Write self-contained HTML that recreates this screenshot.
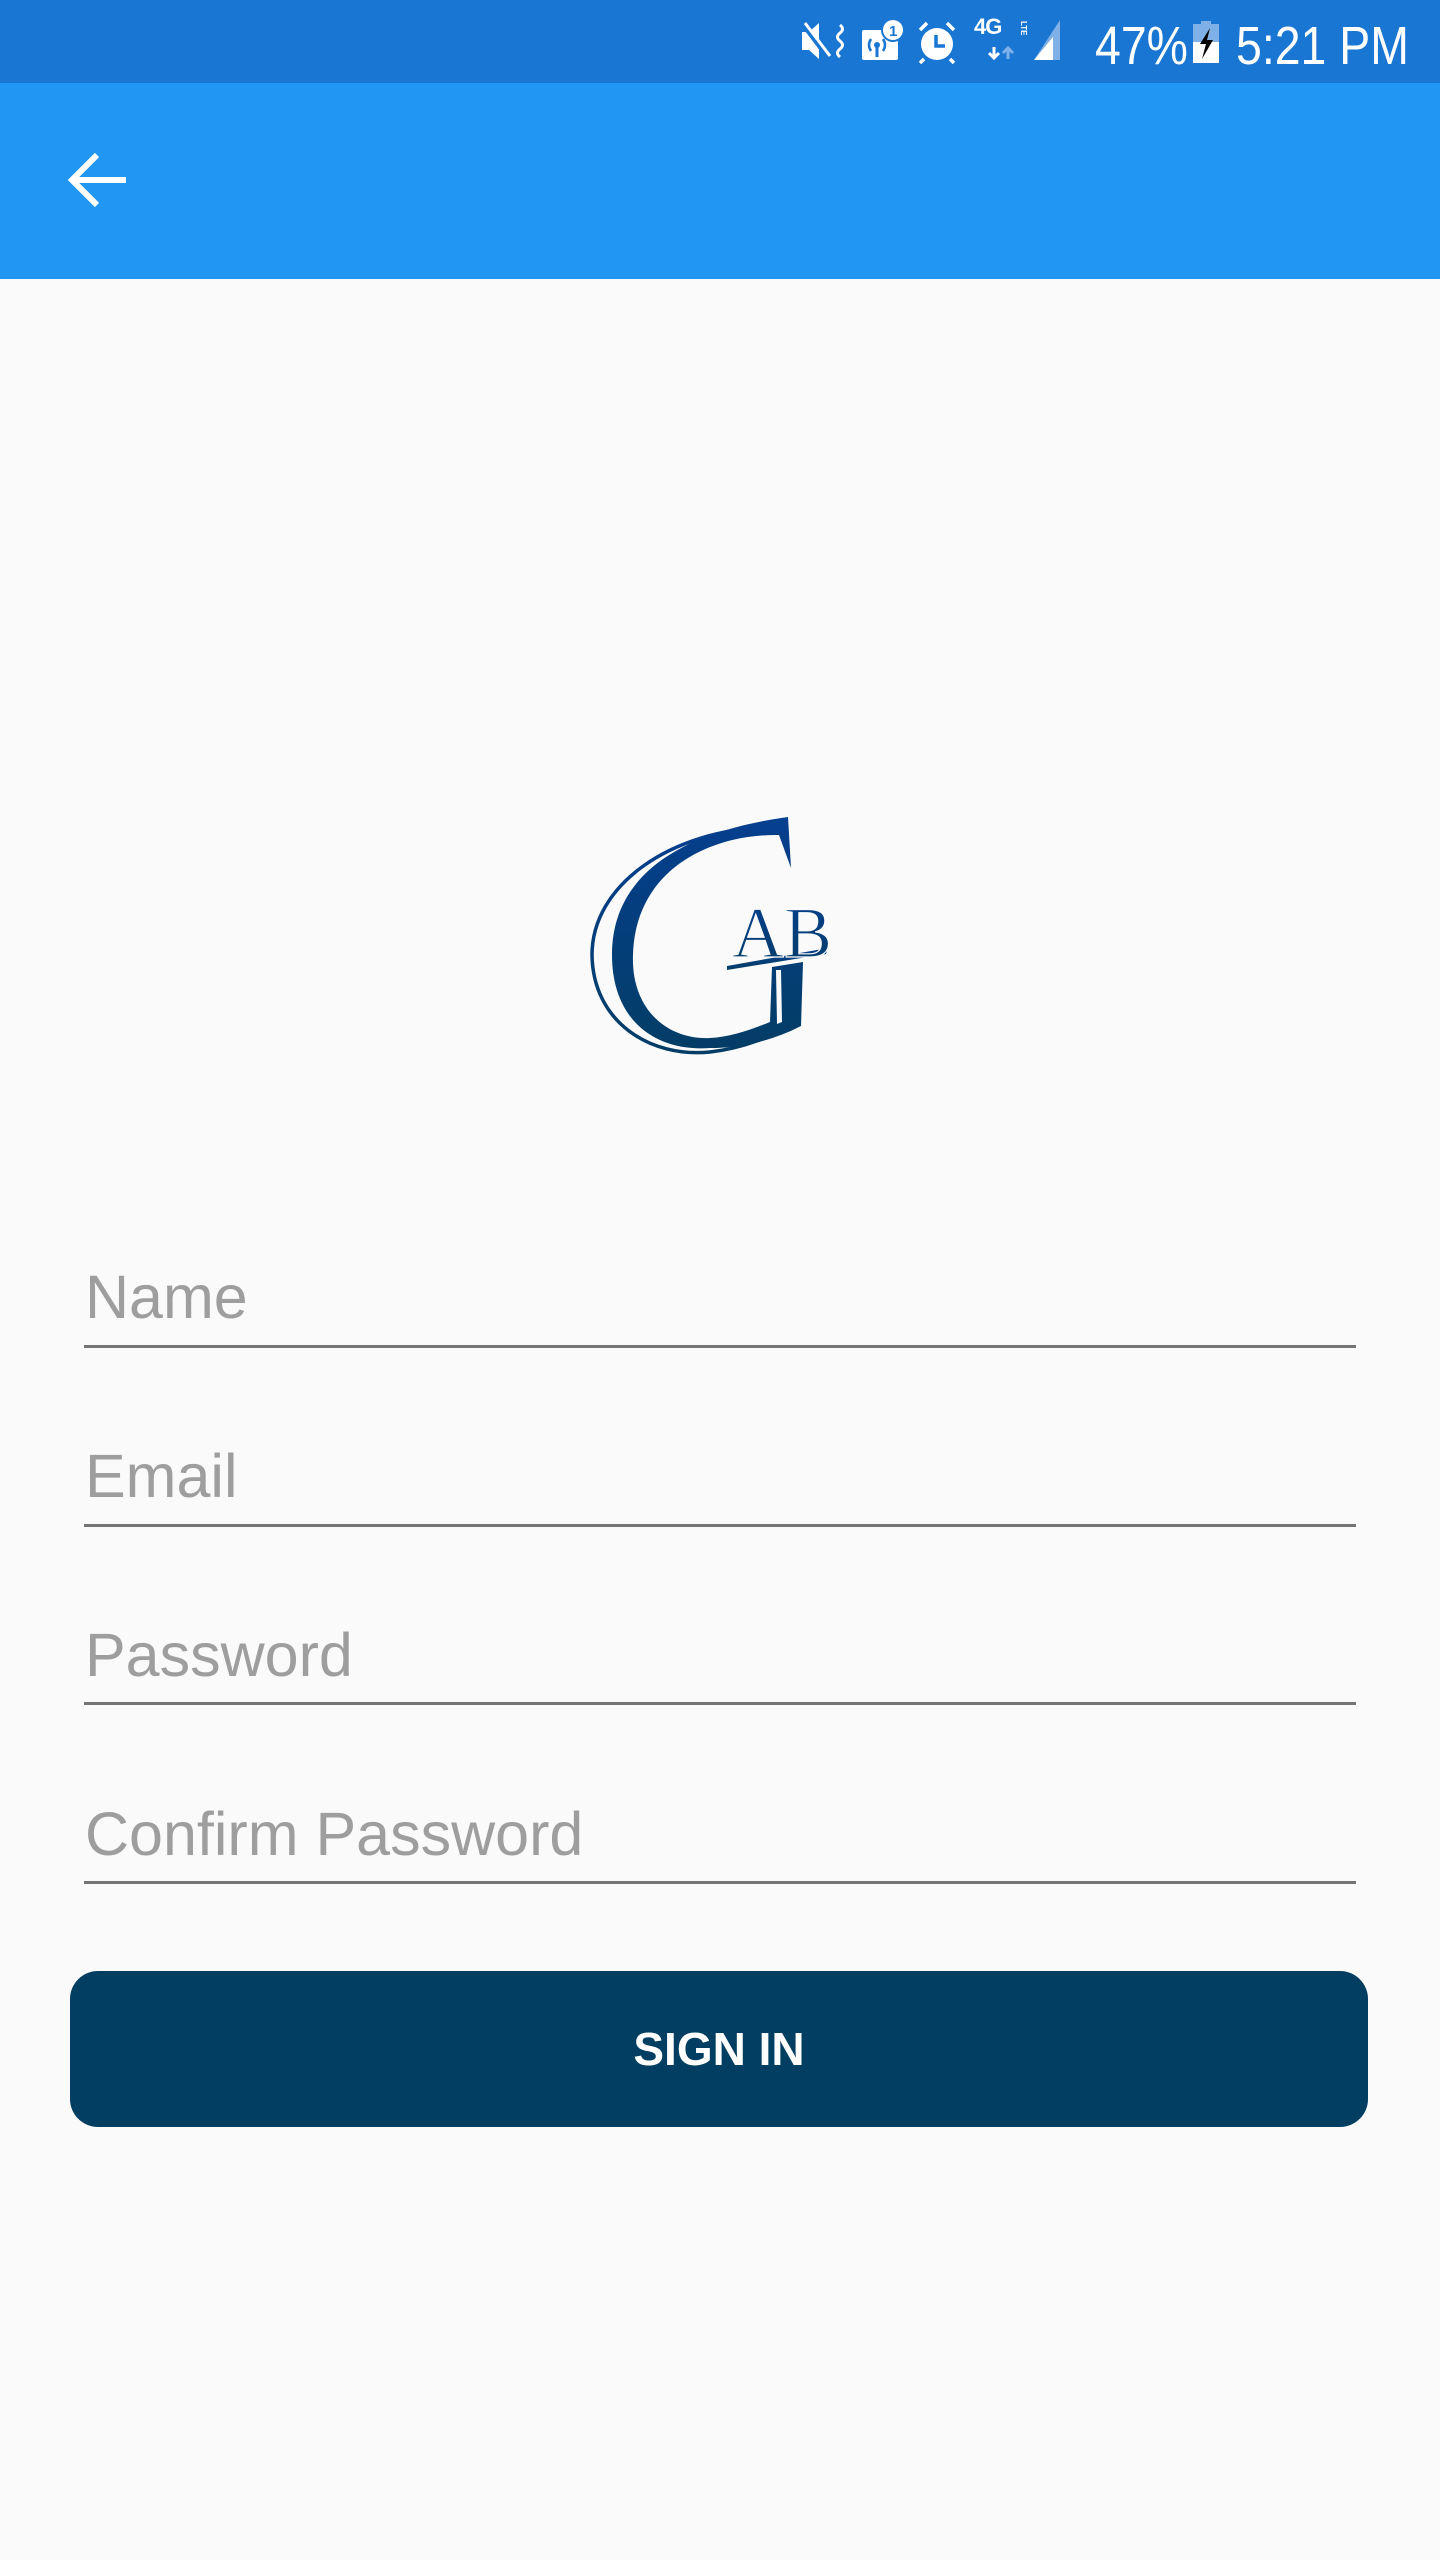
<!DOCTYPE html>
<html><head><meta charset="utf-8"><style>
html,body{margin:0;padding:0}
body{width:1440px;height:2560px;background:#fafafa;position:relative;overflow:hidden;font-family:"Liberation Sans",Roboto,sans-serif}
.sb{position:absolute;left:0;top:0;width:1440px;height:83px;background:#1976d2;color:#fff}
.ab{position:absolute;left:0;top:83px;width:1440px;height:196px;background:#2196f3}
.lbl{position:absolute;left:85px;font-size:61px;color:#9e9e9e;line-height:1}
.ln{position:absolute;left:84px;width:1272px;height:3px;background:#757575}
.btn{position:absolute;left:70px;top:1971px;width:1298px;height:156px;background:#023e62;border-radius:28px;color:#fff;font-weight:bold;font-size:46px;text-align:center;line-height:156px}
.st{position:absolute;top:14px;font-size:54px;line-height:64px;transform-origin:0 0;transform:scaleX(0.86);white-space:nowrap}
</style></head><body>
<div class="sb">
<svg style="position:absolute;left:780px;top:15px" width="300" height="70" viewBox="0 0 300 70" fill="#fff">
<path d="M22 17 h7 l10 -9 v36 l-10 -9 h-7z"/>
<path d="M23 10 L48 43" stroke="#1976d2" stroke-width="4"/>
<path d="M23 10 L48 43" stroke="#fff" stroke-width="3" transform="translate(2,-2)"/>
<path d="M60 10q5 4 0 8q-5 4 0 8q5 4 0 8q-5 4 0 8" stroke="#fff" stroke-width="3" fill="none"/>
<rect x="82" y="15" width="36" height="30" rx="2"/>
<circle cx="113" cy="15" r="12" fill="#1976d2"/><circle cx="113" cy="15" r="10"/>
<text x="109" y="21" font-size="15" fill="#1976d2" font-weight="bold">1</text>
<path d="M97 42 V32" stroke="#1976d2" stroke-width="3"/><circle cx="97" cy="30" r="3" fill="#1976d2"/>
<path d="M91 24 q-4 6 0 12 M103 24 q4 6 0 12" stroke="#1976d2" stroke-width="2.5" fill="none"/>
<circle cx="157" cy="29" r="16"/>
<path d="M156 20 V31 H165" stroke="#1976d2" stroke-width="3.5" fill="none"/>
<path d="M140 15 l7 -7 M174 15 l-7 -7 M144 44 l-4 4 M170 44 l4 4" stroke="#fff" stroke-width="3.5"/>
<text x="194" y="19" font-size="22" font-weight="bold" fill="#fff" style="letter-spacing:-1px">4G</text>
<text x="0" y="0" font-size="8" font-weight="bold" fill="#fff" transform="translate(241,6) rotate(90)">LTE</text>
<path d="M214 32v11M209 38l5 5 5-5" stroke="#fff" stroke-width="3" fill="none"/>
<path d="M228 44v-11M223 38l5-5 5 5" stroke="#7fb1e8" stroke-width="3" fill="none"/>
<path d="M280 5 V45 H254 Z" fill="#7fb1e8"/>
<path d="M254 45 L273 22 V45 Z"/>
</svg>
<div class="st" style="left:1095px">47%</div>
<svg style="position:absolute;left:1193px;top:21px" width="26" height="42" viewBox="0 0 26 42"><rect x="8" y="0" width="10" height="3" fill="#7fb1e8"/><rect x="0" y="3" width="26" height="39" fill="#7fb1e8"/><rect x="0" y="21" width="26" height="21" fill="#fff"/><path d="M17 7 L7 23 H13 L9 38 L20 19 H14 Z" fill="#000"/></svg>
<div class="st" style="left:1236px">5:21 PM</div>
</div>
<div class="ab">
<svg style="position:absolute;left:64px;top:66px" width="64" height="64" viewBox="0 0 64 64"><path d="M62 31H10M33 6L8 31l25 25" stroke="#fff" stroke-width="6" fill="none"/></svg>
</div>
<svg style="position:absolute;left:560px;top:790px" width="300" height="290" viewBox="0 0 300 290">
<defs><linearGradient id="g" x1="0" y1="0" x2="0" y2="1"><stop offset="0" stop-color="#053f8f"/><stop offset="1" stop-color="#033d66"/></linearGradient></defs>
<path d="M210 37 C110 40 32 95 32 165 C33 232 90 268 150 262 C185 258 212 246 238 232" stroke="url(#g)" stroke-width="3.5" fill="none"/>
<path d="M228 27 L231 78 L219 45 C150 44 75 80 73 165 C71 222 110 250 150 248 C170 247 190 240 210 232 L212 177 L243 172 L241 236 C210 252 178 258 150 258 C95 262 52 230 52 165 C52 85 120 42 228 27Z" fill="url(#g)"/>
<path d="M167 176 L268 158 L266 164 L167 180Z" fill="url(#g)"/>
<path d="M216 180 L221 180 L222 232 L217 234Z" fill="#fafafa"/>
<text x="172" y="167" font-family="Liberation Serif,serif" font-size="72" fill="url(#g)" stroke="#fafafa" stroke-width="1.2">AB</text>
</svg>
<div class="lbl" style="top:1267px">Name</div><div class="ln" style="top:1345px"></div>
<div class="lbl" style="top:1446px">Email</div><div class="ln" style="top:1524px"></div>
<div class="lbl" style="top:1625px">Password</div><div class="ln" style="top:1702px"></div>
<div class="lbl" style="top:1804px">Confirm Password</div><div class="ln" style="top:1881px"></div>
<div class="btn">SIGN IN</div>
</body></html>
